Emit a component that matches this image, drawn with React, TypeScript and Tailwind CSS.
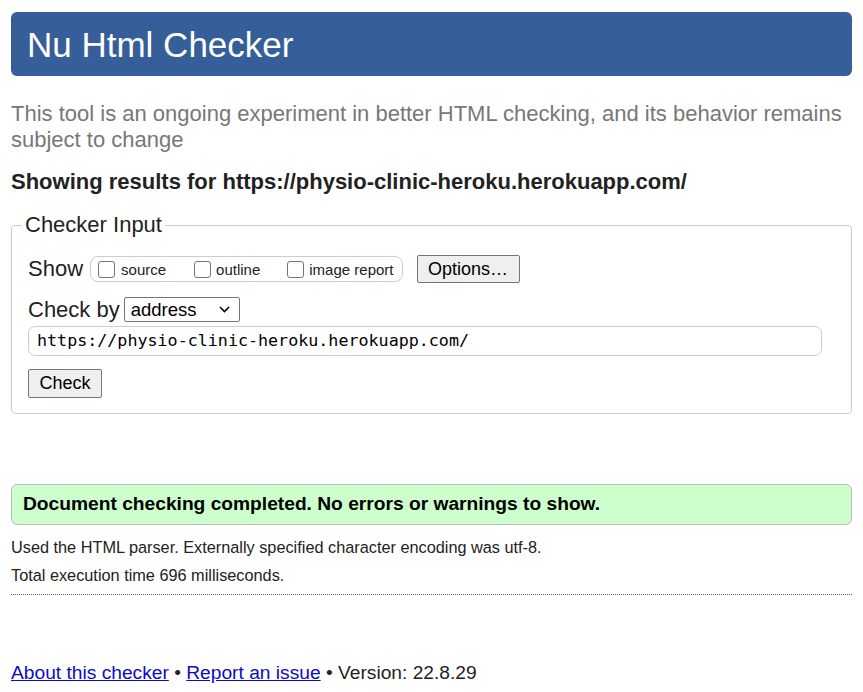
export default function App() {
  return (
    <div className="min-h-[692px] bg-white px-[11px] pt-[12px] pb-[10px] font-['Liberation_Sans',Arial,sans-serif] text-[#222]">
      {/* Header */}
      <div className="flex h-[64px] items-center rounded-[6px] bg-[#365e98] pl-[16px]">
        <h1 className="text-[35px] leading-none text-white">Nu Html Checker</h1>
      </div>

      <p className="mt-[25px] text-[22px] leading-[26px] text-[#777]">
        This tool is an ongoing experiment in better HTML checking, and its behavior remains
        subject to change
      </p>

      <p className="mt-[16px] text-[22px] font-bold leading-[26px] text-[#222]">
        Showing results for https://physio-clinic-heroku.herokuapp.com/
      </p>

      {/* Checker input */}
      <fieldset className="mt-[17px] rounded-[4px] border border-[#ccc] pb-[15px] pl-[16px]">
        <legend className="ml-[-6px] px-[3px] text-[22px] leading-[26px]">Checker Input</legend>

        <div className="mt-[17px] flex h-[28px] items-center">
          <span className="text-[22px] leading-none">Show</span>
          <div className="ml-[7px] flex h-[26px] items-center rounded-[8px] border border-[#ccc] pl-[7px] pr-[8px] text-[15px]">
            <span className="h-[17px] w-[17px] rounded-[3px] border border-[#767676] bg-white" />
            <span className="ml-[6px] mt-[3px]">source</span>
            <span className="ml-[28px] h-[17px] w-[17px] rounded-[3px] border border-[#767676] bg-white" />
            <span className="ml-[5px] mt-[3px]">outline</span>
            <span className="ml-[27px] h-[17px] w-[17px] rounded-[3px] border border-[#767676] bg-white" />
            <span className="ml-[5px] mt-[3px]">image report</span>
          </div>
          <button className="ml-[14px] flex h-[28px] w-[103px] items-center justify-center rounded-[2px] border border-[#767676] bg-[#efefef] text-[18px] text-black">
            Options…
          </button>
        </div>

        <div className="mt-[14px] flex h-[25px] items-center">
          <span className="text-[22px] leading-none">Check by</span>
          <div className="ml-[4px] flex h-[25px] w-[116px] items-center justify-between rounded-[2px] border border-[#767676] bg-white pl-[6px] pr-[9px] text-[18.5px] text-black">
            <span>address</span>
            <svg width="11" height="7" viewBox="0 0 11 7" fill="none">
              <path d="M1 1l4.5 4.5L10 1" stroke="#000" strokeWidth="1.6" />
            </svg>
          </div>
        </div>

        <div className="mt-[4px] flex h-[30px] w-[794px] items-center rounded-[7px] border border-[#ccc] pl-[8px] font-['DejaVu_Sans_Mono',monospace] text-[16.7px] text-black">
          https://physio-clinic-heroku.herokuapp.com/
        </div>

        <button className="mt-[13px] flex h-[29px] w-[74px] items-center justify-center rounded-[2px] border border-[#767676] bg-[#efefef] text-[18px] text-black">
          Check
        </button>
      </fieldset>

      {/* Result */}
      <div className="mt-[70px] flex h-[41px] items-center rounded-[6px] border border-[#bdbdbd] bg-[#ccffcc] pl-[11px]">
        <span className="text-[19.2px] font-bold text-black">
          Document checking completed. No errors or warnings to show.
        </span>
      </div>

      <p className="mt-[10px] text-[16.3px] leading-[24px] text-[#222]">
        Used the HTML parser. Externally specified character encoding was utf-8.
      </p>
      <p className="mt-[4px] text-[16.3px] leading-[24px] text-[#222]">
        Total execution time 696 milliseconds.
      </p>
      <div className="mt-[7px] border-t border-dotted border-[#666]" />

      <p className="mt-[66px] text-[19.2px] leading-[24px] text-[#222]">
        <a href="#" className="text-[#0b0bc4] underline">About this checker</a>
        {' • '}
        <a href="#" className="text-[#0b0bc4] underline">Report an issue</a>
        {' • Version: 22.8.29'}
      </p>
    </div>
  );
}
